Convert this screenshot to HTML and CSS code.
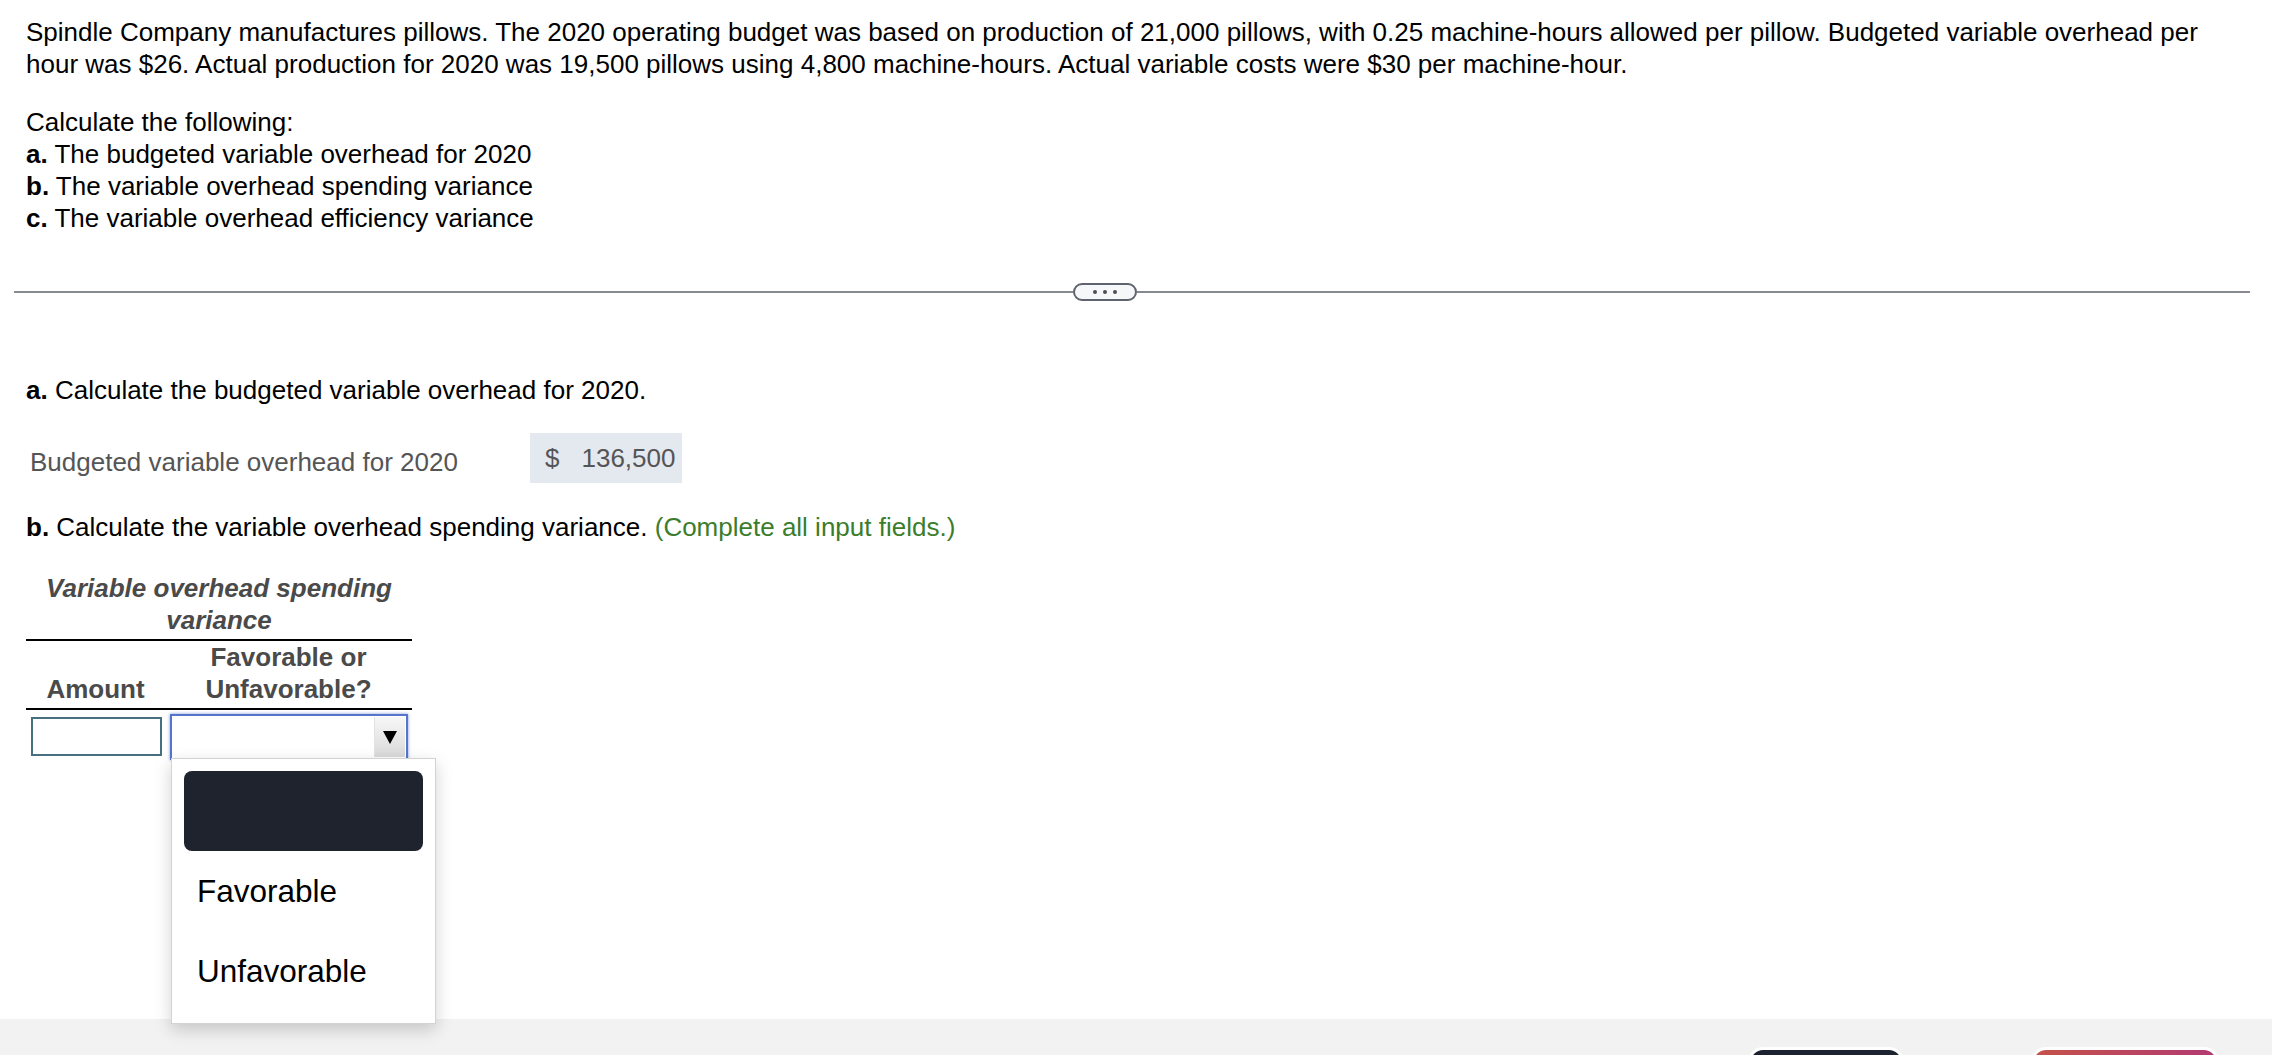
FILE: index.html
```html
<!DOCTYPE html>
<html lang="en">
<head>
<meta charset="utf-8">
<title>Variable overhead</title>
<link rel="stylesheet" href="styles.css">
</head>
<body>
<div class="page">
  <main class="content">
    <p class="intro">Spindle Company manufactures pillows. The 2020 operating budget was based on production of 21,000 pillows, with 0.25 machine-hours allowed per pillow. Budgeted variable overhead per hour was $26. Actual production for 2020 was 19,500 pillows using 4,800 machine-hours. Actual variable costs were $30 per machine-hour.</p>
    <div class="tasks">
      <div>Calculate the following:</div>
      <div><b>a.</b> The budgeted variable overhead for 2020</div>
      <div><b>b.</b> The variable overhead spending variance</div>
      <div><b>c.</b> The variable overhead efficiency variance</div>
    </div>

    <div class="divider">
      <span class="rule rule-left"></span>
      <span class="pill"><i></i><i></i><i></i></span>
      <span class="rule rule-right"></span>
    </div>

    <div class="question qa"><b>a.</b> Calculate the budgeted variable overhead for 2020.</div>
    <div class="answer-row">
      <div class="answer-label">Budgeted variable overhead for 2020</div>
      <div class="answer-box"><span class="cur">$</span><span class="num">136,500</span></div>
    </div>

    <div class="question qb"><b>b.</b> Calculate the variable overhead spending variance. <span class="hint">(Complete all input fields.)</span></div>

    <table class="var-table">
      <thead>
        <tr class="hrow1"><th colspan="2"><em>Variable overhead spending<br>variance</em></th></tr>
        <tr class="hrow2"><th class="c1">Amount</th><th class="c2">Favorable or<br>Unfavorable?</th></tr>
      </thead>
      <tbody>
        <tr>
          <td class="c1"><div class="amount-input"></div></td>
          <td class="c2">
            <div class="select-wrap">
              <div class="select">
                <span class="select-arrow"><svg width="14" height="13" viewBox="0 0 14 13"><polygon points="0,0 14,0 7,13" fill="#000"/></svg></span>
              </div>
              <div class="dropdown">
                <div class="opt opt-active"></div>
                <div class="opt">Favorable</div>
                <div class="opt">Unfavorable</div>
              </div>
            </div>
          </td>
        </tr>
      </tbody>
    </table>
  </main>

  <footer class="bottom-bar">
    <span class="btn btn-dark"></span>
    <span class="btn btn-red"></span>
  </footer>
</div>
</body>
</html>
```

FILE: styles.css
```css
html, body {
  margin: 0;
  padding: 0;
  overflow: hidden;
  background: #fff;
}

body {
  font-family: "Liberation Sans", Arial, sans-serif;
  font-size: 26px;
  line-height: 32px;
  color: #000;
}

.page {
  display: flex;
  flex-direction: column;
  height: 1055px;
}

.content {
  box-sizing: border-box;
  height: 1019px;
  padding: 16px 22px 0 26px;
  position: relative;
}

.intro {
  margin: 0;
}

.tasks {
  margin-top: 26px;
}

b { font-weight: bold; }

.divider {
  display: flex;
  align-items: center;
  margin: 49px 0 0 -12px;
  height: 18px;
}

.rule {
  height: 2px;
  background: #878a91;
}

.rule-left { width: 1059px; }
.rule-right { flex: 1; }

.pill {
  box-sizing: border-box;
  width: 64px;
  height: 18px;
  border: 2px solid #5e636e;
  border-radius: 9px;
  background: #f6f7f9;
  display: flex;
  align-items: center;
  justify-content: center;
  gap: 6px;
}

.pill i {
  width: 4px;
  height: 4px;
  border-radius: 50%;
  background: #4a4e57;
}

.qa { margin-top: 73px; }

.answer-row {
  display: flex;
  align-items: center;
  margin-top: 27px;
}

.answer-label {
  box-sizing: border-box;
  width: 504px;
  padding-left: 4px;
  margin-top: 8px;
  color: #555;
}

.answer-box {
  box-sizing: border-box;
  height: 50px;
  width: 152px;
  padding: 0 8px 0 15px;
  display: flex;
  align-items: center;
  background: #e4e8ef;
  color: #555;
}

.answer-box .num { margin-left: 22px; }

.qb { margin-top: 28px; }

.hint { color: #3b7d2b; }

.var-table {
  margin-top: 29px;
  border-collapse: collapse;
  border-spacing: 0;
}

.var-table th {
  padding: 0;
  font-weight: bold;
  color: #4a4a4a;
  text-align: center;
}

.hrow1 th {
  padding-bottom: 3px;
  border-bottom: 2px solid #000;
}

.hrow1 em { font-style: italic; }

.hrow2 th {
  vertical-align: bottom;
  padding-bottom: 3px;
  border-bottom: 2px solid #000;
}

.c1 { width: 139px; }
.c2 { width: 247px; }

.var-table td {
  padding: 3px 0 0 0;
  vertical-align: top;
}

.amount-input {
  box-sizing: border-box;
  width: 131px;
  height: 39px;
  margin: 4px 0 0 5px;
  border: 2px solid #46707f;
  background: #fff;
}

.select-wrap {
  position: relative;
  margin: 1px 0 0 5px;
  width: 238px;
}

.select {
  box-sizing: border-box;
  height: 46px;
  border: 2px solid #5575cc;
  box-shadow: 0 0 3px rgba(70, 100, 210, 0.7);
  background: #fff;
  display: flex;
  justify-content: flex-end;
  padding: 1px 1px 1px 0;
}

.select-arrow {
  width: 30px;
  display: flex;
  align-items: center;
  justify-content: center;
  background: linear-gradient(#f7f7f7, #d9d9d9);
  border-left: 1px solid #e2e2e2;
}

.dropdown {
  position: absolute;
  left: 1px;
  top: 44px;
  z-index: 10;
  box-sizing: border-box;
  width: 265px;
  padding: 12px;
  background: #fff;
  border: 1px solid #d3d3d3;
  box-shadow: 0 6px 16px rgba(0, 0, 0, 0.18);
}

.opt {
  height: 80px;
  padding-left: 13px;
  display: flex;
  align-items: center;
  font-size: 31.5px;
  color: #000;
}

.opt-active {
  background: #1f232d;
  border-radius: 8px;
}

.bottom-bar {
  height: 36px;
  overflow: hidden;
  background: #f2f2f2;
  display: flex;
  justify-content: flex-end;
  padding: 31px 56px 0 0;
  box-sizing: border-box;
}

.btn {
  height: 50px;
  border-radius: 12px;
  box-shadow: 0 0 0 3px #fff;
}

.btn-dark {
  width: 150px;
  background: #1d2230;
}

.btn-red {
  width: 182px;
  margin-left: 133px;
  background: linear-gradient(90deg, #c5524a, #b23a72);
}
```
